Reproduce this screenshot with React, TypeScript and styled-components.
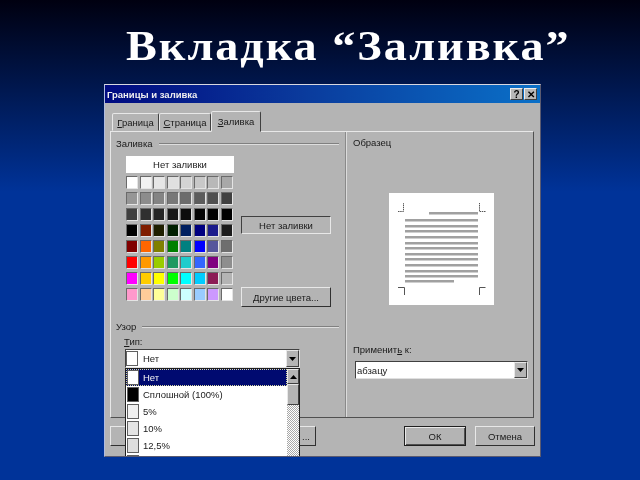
import styled, { createGlobalStyle } from "styled-components";

const GlobalStyle = createGlobalStyle`
    html, body {
        margin: 0;
        padding: 0;
        background: #003399;
    }
`;

const Slide = styled.div`
    width: 640px;
    height: 480px;
    overflow: hidden;
    background: linear-gradient(180deg, #000010 0%, #003399 40%, #003399 100%);
    display: flex;
    flex-direction: column;
`;

const Heading = styled.h1`
    margin: 0;
    height: 84px;
    box-sizing: border-box;
    padding: 21px 0 0 126px;
    font-family: "Liberation Serif", serif;
    font-size: 42px;
    line-height: 50px;
    font-weight: bold;
    letter-spacing: 1.8px;
    color: #ffffff;
    white-space: nowrap;
    transform: scaleX(1.1);
    transform-origin: 126px 0;
`;

const Dialog = styled.div`
    position: relative;
    width: 437px;
    height: 373px;
    margin-left: 104px;
    box-sizing: border-box;
    overflow: hidden;
    background: #b4b4b4;
    border: 1px solid;
    border-color: #d8d8e0 #5a5a70 #5a5a70 #b0bce0;
    font-family: "Liberation Sans", Tahoma, sans-serif;
    font-size: 9.5px;
    color: #1a1a1a;
    filter: blur(0.35px);
`;

const TitleBar = styled.div`
    height: 18px;
    display: flex;
    align-items: center;
    padding: 0 3px 0 2px;
    background: linear-gradient(90deg, #000a80 0%, #0a3a9c 45%, #0a70c8 100%);
    color: #f0f0f0;
    font-weight: bold;
`;

const TitleText = styled.span`
    flex: 1;
`;

const TitleButton = styled.div`
    width: 13px;
    height: 12px;
    margin-left: 1px;
    display: flex;
    align-items: center;
    justify-content: center;
    box-sizing: border-box;
    background: #b8b8b8;
    border: 1px solid;
    border-color: #eeeeee #404040 #404040 #eeeeee;
    font-weight: bold;
    font-size: 10px;
    color: #000;
`;

const TabRow = styled.div`
    display: flex;
    align-items: flex-end;
    height: 28px;
    padding-left: 7px;
`;

const Tab = styled.div<{ $active?: boolean; $width: number }>`
    width: ${props => props.$width}px;
    height: ${props => props.$active ? 21 : 18}px;
    margin-bottom: ${props => props.$active ? -1 : 0}px;
    position: relative;
    z-index: ${props => props.$active ? 2 : 1};
    box-sizing: border-box;
    display: flex;
    align-items: center;
    justify-content: center;
    background: #b4b4b4;
    border: 1px solid;
    border-color: #e8e8e8 #404040 transparent #e8e8e8;
    border-radius: 2px 2px 0 0;
`;

const Panel = styled.div`
    margin: 0 6px 0 5px;
    height: 287px;
    box-sizing: border-box;
    display: flex;
    background: #b4b4b4;
    border: 1px solid;
    border-color: #e8e8e8 #505050 #505050 #e8e8e8;
`;

const LeftColumn = styled.div`
    width: 235px;
    box-sizing: border-box;
    padding: 4px 6px 0 5px;
    border-right: 1px solid #8a8a8a;
    box-shadow: 1px 0 0 #dcdcdc;
`;

const RightColumn = styled.div`
    flex: 1;
    padding: 4px 0 0 7px;
    display: flex;
    flex-direction: column;
`;

const GroupHeader = styled.div<{ $top?: number }>`
    display: flex;
    align-items: center;
    gap: 6px;
    height: 14px;
    margin-top: ${props => props.$top ?? 0}px;
    &::after {
        content: "";
        flex: 1;
        height: 1px;
        background: #808080;
        box-shadow: 0 1px 0 #dedede;
    }
`;

const SampleTitle = styled.div`
    height: 14px;
    line-height: 14px;
`;

const FillArea = styled.div`
    display: flex;
    gap: 7px;
    margin: 6px 0 0 10px;
`;

const SwatchColumn = styled.div`
    width: 108px;
`;

const NoFillBox = styled.div`
    height: 17px;
    display: flex;
    align-items: center;
    justify-content: center;
    background: #ffffff;
    margin-bottom: 3px;
`;

const SwatchGrid = styled.div`
    display: grid;
    grid-template-columns: repeat(8, 13.5px);
    grid-auto-rows: 16px;
`;

const Swatch = styled.div<{ $color: string }>`
    width: 12px;
    height: 13px;
    box-sizing: border-box;
    background: ${props => props.$color};
    border: 1px solid;
    border-color: #6a6a6a #e4e4e4 #e4e4e4 #6a6a6a;
`;

const SideColumn = styled.div`
    width: 90px;
    padding-top: 60px;
    display: flex;
    flex-direction: column;
`;

const SunkenLabel = styled.div`
    height: 18px;
    box-sizing: border-box;
    display: flex;
    align-items: center;
    justify-content: center;
    border: 1px solid;
    border-color: #404040 #e8e8e8 #e8e8e8 #404040;
`;

const Button = styled.div<{ $width: number; $default?: boolean; $end?: boolean }>`
    width: ${props => props.$width}px;
    height: 20px;
    box-sizing: border-box;
    display: flex;
    align-items: center;
    justify-content: ${props => props.$end ? "flex-end" : "center"};
    padding-right: ${props => props.$end ? 5 : 0}px;
    background: #b4b4b4;
    border: 1px solid;
    border-color: ${props => props.$default ? "#202020" : "#e8e8e8 #303030 #303030 #e8e8e8"};
    box-shadow: ${props => props.$default ? "inset 1px 1px 0 #e8e8e8, inset -1px -1px 0 #505050" : "none"};
`;

const MoreColors = styled(Button)`
    margin-top: 53px;
`;

const FieldLabel = styled.div<{ $left: number; $top: number }>`
    height: 12px;
    line-height: 12px;
    margin: ${props => props.$top}px 0 0 ${props => props.$left}px;
`;

const Combo = styled.div<{ $width: number; $height: number; $left: number; $top: number }>`
    width: ${props => props.$width}px;
    height: ${props => props.$height}px;
    margin: ${props => props.$top}px 0 0 ${props => props.$left}px;
    box-sizing: border-box;
    display: flex;
    align-items: center;
    background: #ffffff;
    border: 1px solid;
    border-color: #404040 #e0e0e0 #e0e0e0 #404040;
`;

const ComboText = styled.span`
    flex: 1;
    padding-left: 1px;
`;

const PatternName = styled.span`
    flex: 1;
    padding-left: 5px;
`;

const ArrowButton = styled.div<{ $width: number }>`
    width: ${props => props.$width}px;
    align-self: stretch;
    box-sizing: border-box;
    display: flex;
    align-items: center;
    justify-content: center;
    background: #b4b4b4;
    border: 1px solid;
    border-color: #e8e8e8 #404040 #404040 #e8e8e8;
`;

const SampleSpace = styled.div`
    margin: 43px 0 0 36px;
    width: 105px;
    height: 112px;
    background: #ffffff;
`;

const Footer = styled.div`
    display: flex;
    margin: 8px 5px 0 5px;
`;

const Spacer = styled.div`
    flex: 1;
`;

const CancelGap = styled.div`
    width: 9px;
`;

const DropList = styled.div`
    position: absolute;
    left: 20px;
    top: 283px;
    width: 175px;
    height: 92px;
    box-sizing: border-box;
    display: flex;
    background: #ffffff;
    border: 1px solid #202020;
    z-index: 5;
`;

const ListItems = styled.div`
    flex: 1;
`;

const ListRow = styled.div<{ $selected?: boolean }>`
    height: 17px;
    display: flex;
    align-items: center;
    gap: 4px;
    box-sizing: border-box;
    padding-left: 1px;
    background: ${props => props.$selected ? "#000a70" : "#ffffff"};
    color: ${props => props.$selected ? "#f4f4f4" : "#1a1a1a"};
    outline: ${props => props.$selected ? "1px dotted #d8d8a0" : "none"};
    outline-offset: -1px;
`;

const PatternSwatch = styled.div<{ $color: string }>`
    width: 12px;
    height: 15px;
    box-sizing: border-box;
    background: ${props => props.$color};
    border: 1px solid #606060;
`;

const ScrollBar = styled.div`
    width: 12px;
    display: flex;
    flex-direction: column;
    background: repeating-conic-gradient(#ffffff 0 25%, #a8a8a8 0 50%) 0 0 / 2px 2px;
`;

const ScrollButton = styled.div<{ $height: number }>`
    height: ${props => props.$height}px;
    box-sizing: border-box;
    display: flex;
    align-items: center;
    justify-content: center;
    background: #b4b4b4;
    border: 1px solid;
    border-color: #e8e8e8 #404040 #404040 #e8e8e8;
`;

const Triangle = styled.svg`
    width: 7px;
    height: 4px;
    display: block;
`;

const fillColors = [
    "#ffffff", "#f2f2f2", "#e6e6e6", "#e0e0e0", "#d4d4d4", "#c8c8c8", "#b8b8b8", "#a8a8a8",
    "#969696", "#8c8c8c", "#848484", "#787878", "#6c6c6c", "#5c5c5c", "#505050", "#404040",
    "#404040", "#303030", "#262626", "#181818", "#0c0c0c", "#050505", "#030303", "#000000",
    "#000000", "#7f1d00", "#1f1f00", "#002000", "#002060", "#000080", "#1c1c8c", "#1c1c1c",
    "#800000", "#ff6600", "#808000", "#008000", "#008080", "#0000ff", "#56569c", "#6e6e6e",
    "#ff0000", "#ff9900", "#99cc00", "#1f9960", "#1fcccc", "#3366ff", "#800080", "#8e8e8e",
    "#ff00ff", "#ffcc00", "#ffff00", "#00ff00", "#00ffff", "#00ccff", "#8c1c56", "#b4b4b4",
    "#ff99cc", "#ffcc99", "#ffff99", "#ccffcc", "#ccffff", "#99ccff", "#cc99ff", "#ffffff",
];

const patterns = [
    { name: "Нет", color: "#ffffff" },
    { name: "Сплошной (100%)", color: "#000000" },
    { name: "5%", color: "#f0f0f0" },
    { name: "10%", color: "#e4e4e4" },
    { name: "12,5%", color: "#dedede" },
    { name: "", color: "#d4d4d4" },
];

const sampleLines = [26, 32, 37, 43, 49, 54, 60, 65, 71, 77, 82];

const SamplePage = () => (
    <svg width="105" height="112" viewBox="0 0 105 112">
        <rect x="40" y="19" width="49" height="2.5" fill="#a0a0a0" />
        {sampleLines.map(y => (
            <rect key={y} x="16" y={y} width="73" height="2.5" fill="#a0a0a0" />
        ))}
        <rect x="16" y="87" width="49" height="2.5" fill="#a0a0a0" />
        <path d="M9 18.500H14.500V10" fill="none" stroke="#555" strokeDasharray="1.500 0.700" />
        <path d="M96.500 18.500H90.500V10" fill="none" stroke="#555" strokeDasharray="1.500 0.700" />
        <path d="M9 94.500H15.500V102" fill="none" stroke="#555" />
        <path d="M96.500 94.500H90.500V102" fill="none" stroke="#555" />
    </svg>
);

const DownArrow = () => (
    <Triangle viewBox="0 0 7 4"><path d="M0 0H7L3.500 4Z" fill="#000" /></Triangle>
);

const UpArrow = () => (
    <Triangle viewBox="0 0 7 4"><path d="M0 4H7L3.500 0Z" fill="#000" /></Triangle>
);

export default function App() {
    return (
        <Slide>
            <GlobalStyle />
            <Heading>Вкладка “Заливка”</Heading>
            <Dialog>
                <TitleBar>
                    <TitleText>Границы и заливка</TitleText>
                    <TitleButton>?</TitleButton>
                    <TitleButton>✕</TitleButton>
                </TitleBar>
                <TabRow>
                    <Tab $width={47}><span><u>Г</u>раница</span></Tab>
                    <Tab $width={52}><span><u>С</u>траница</span></Tab>
                    <Tab $active $width={50}><span><u>З</u>аливка</span></Tab>
                </TabRow>
                <Panel>
                    <LeftColumn>
                        <GroupHeader>Заливка</GroupHeader>
                        <FillArea>
                            <SwatchColumn>
                                <NoFillBox>Нет заливки</NoFillBox>
                                <SwatchGrid>
                                    {fillColors.map((color, i) => <Swatch key={i} $color={color} />)}
                                </SwatchGrid>
                            </SwatchColumn>
                            <SideColumn>
                                <SunkenLabel>Нет заливки</SunkenLabel>
                                <MoreColors $width={90}><span><u>Д</u>ругие цвета...</span></MoreColors>
                            </SideColumn>
                        </FillArea>
                        <GroupHeader $top={12}>Узор</GroupHeader>
                        <FieldLabel $left={8} $top={3}><u>Т</u>ип:</FieldLabel>
                        <Combo $width={175} $height={19} $left={9} $top={1}>
                            <PatternSwatch $color="#ffffff" />
                            <PatternName>Нет</PatternName>
                            <ArrowButton $width={13}><DownArrow /></ArrowButton>
                        </Combo>
                    </LeftColumn>
                    <RightColumn>
                        <SampleTitle>Образец</SampleTitle>
                        <SampleSpace><SamplePage /></SampleSpace>
                        <FieldLabel $left={0} $top={39}>Применит<u>ь</u> к:</FieldLabel>
                        <Combo $width={173} $height={18} $left={2} $top={5}>
                            <ComboText>абзацу</ComboText>
                            <ArrowButton $width={13}><DownArrow /></ArrowButton>
                        </Combo>
                    </RightColumn>
                </Panel>
                <Footer>
                    <Button $width={206} $end>...</Button>
                    <Spacer />
                    <Button $width={62} $default>ОК</Button>
                    <CancelGap />
                    <Button $width={60}>Отмена</Button>
                </Footer>
                <DropList>
                    <ListItems>
                        {patterns.map((p, i) => (
                            <ListRow key={i} $selected={i === 0}>
                                <PatternSwatch $color={p.color} />
                                {p.name}
                            </ListRow>
                        ))}
                    </ListItems>
                    <ScrollBar>
                        <ScrollButton $height={15}><UpArrow /></ScrollButton>
                        <ScrollButton $height={21} />
                    </ScrollBar>
                </DropList>
            </Dialog>
        </Slide>
    );
}
